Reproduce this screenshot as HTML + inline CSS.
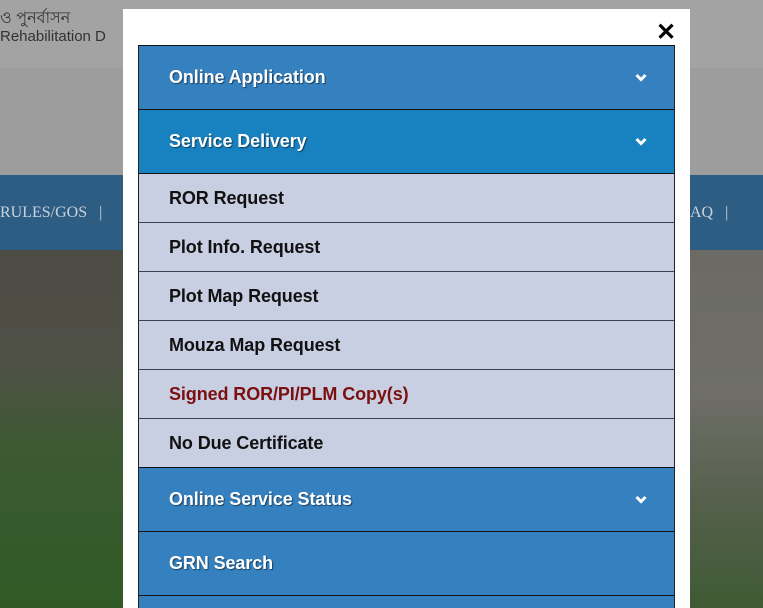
<!DOCTYPE html>
<html><head><meta charset="utf-8"><style>
*{margin:0;padding:0;box-sizing:border-box}
html,body{width:763px;height:608px;overflow:hidden}
body{position:relative;background:#9a9a9a;font-family:"Liberation Sans",Arial,sans-serif}
.hdr{position:absolute;left:0;top:0;width:763px;height:68px;background:#a3a3a3}
.hdr2{position:absolute;left:0;top:68px;width:763px;height:107px;background:#9d9d9d}
.nav{position:absolute;left:0;top:175px;width:763px;height:75px;background:#2e5d83}
.photo{position:absolute;left:0;top:250px;width:763px;height:358px;background:linear-gradient(180deg,#4c4b44 0%,#4f5046 30%,#3d5a33 55%,#2f5a25 100%)}
.photoR{position:absolute;left:690px;top:250px;width:73px;height:358px;background:linear-gradient(180deg,#6b6a64 0%,#6f6e68 40%,#55604c 70%,#3f5a34 100%)}
.modal{position:absolute;left:123px;top:9px;width:567px;height:599px;background:#fff}
.x{position:absolute;left:656px;top:20px;font-size:24px;font-weight:bold;color:#000;line-height:26px}
.menu{position:absolute;left:138px;top:45px;width:537px;height:563px;overflow:hidden;border-top:1px solid #111}
.r{position:relative;height:64px;border-bottom:1px solid #111;border-left:1px solid #222;border-right:1px solid #222;color:#fff;font-weight:bold;font-size:18px;padding-left:30px;line-height:63px;text-shadow:1px 1px 1px rgba(0,0,0,.5);letter-spacing:-0.1px}
.a{background:#3580be}.b{background:#1881bf}
.s{height:49px;line-height:48px;background:#c8cfe3;color:#111;text-shadow:none;border-bottom:1px solid #3a4250}
.red{color:#7a1010}
.chev{position:absolute;right:27px;top:27px;width:12px;height:10px}
</style></head><body>
<div class="hdr"></div><div class="hdr2"></div>
<div style="position:absolute;left:0;top:5px;font-size:16px;color:#333;font-family:'Liberation Sans','Noto Sans CJK SC',sans-serif">ও পুনর্বাসন</div>
<div style="position:absolute;left:0;top:28px;font-size:15px;color:#333">Rehabilitation D</div>
<div class="nav"></div>
<span style="position:absolute;left:0;top:204px;color:#c9d3dc;font-family:'Liberation Serif',serif;font-size:16px">RULES/GOS &nbsp;&nbsp;|</span>
<span style="position:absolute;left:690px;top:204px;color:#c9d3dc;font-family:'Liberation Serif',serif;font-size:16px">AQ &nbsp;&nbsp;|</span>
<div class="photo"></div><div class="photoR"></div>
<div class="modal"></div>
<div class="x">✕</div>
<div class="menu">
<div class="r a">Online Application<svg class="chev" viewBox="0 0 12 10"><path d="M1.5 2L6 6.5L10.5 2" stroke="#fff" stroke-width="3" fill="none"/></svg></div>
<div class="r b">Service Delivery<svg class="chev" viewBox="0 0 12 10"><path d="M1.5 2L6 6.5L10.5 2" stroke="#fff" stroke-width="3" fill="none"/></svg></div>
<div class="r s">ROR Request</div>
<div class="r s">Plot Info. Request</div>
<div class="r s">Plot Map Request</div>
<div class="r s">Mouza Map Request</div>
<div class="r s red">Signed ROR/PI/PLM Copy(s)</div>
<div class="r s" style="border-bottom-color:#111">No Due Certificate</div>
<div class="r a">Online Service Status<svg class="chev" viewBox="0 0 12 10"><path d="M1.5 2L6 6.5L10.5 2" stroke="#fff" stroke-width="3" fill="none"/></svg></div>
<div class="r a">GRN Search</div>
<div class="r a"></div>
</div>
</body></html>
